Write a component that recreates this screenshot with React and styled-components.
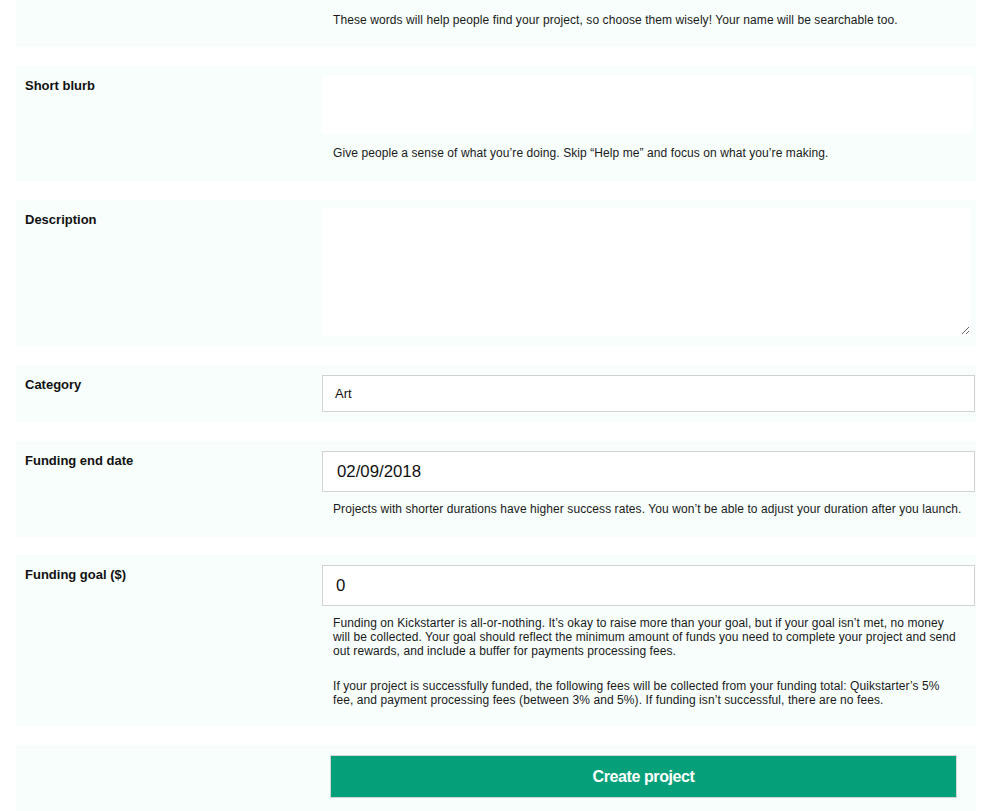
import React from 'react';
import styled, { createGlobalStyle } from 'styled-components';

const GlobalStyle = createGlobalStyle`
  html, body {
    margin: 0;
    padding: 0;
    background: #ffffff;
    overflow: hidden;
  }
  * {
    box-sizing: border-box;
  }
`;

const Page = styled.form`
  margin-top: -46px;
  padding: 0 15px 0 16px;
  font-family: 'Liberation Sans', Arial, Helvetica, sans-serif;
  color: #1a1a1a;
`;

const Row = styled.div`
  display: grid;
  grid-template-columns: 297px 1fr;
  background-color: #f7fefc;
  padding: 10px 1px 10px 9px;
  margin-bottom: ${props => props.$after || 19}px;
`;

const Label = styled.label`
  padding-top: 2px;
  font-size: 13px;
  font-weight: bold;
  line-height: 16px;
  color: #111;
`;

const Field = styled.div`
  display: block;
`;

const TextInput = styled.input`
  display: block;
  width: 100%;
  height: ${props => props.$height || 37}px;
  border: 1px solid #d2d2d2;
  background: #ffffff;
  padding: 0 ${props => props.$pad || 12}px;
  font-family: 'Liberation Sans', Arial, sans-serif;
  font-size: ${props => props.$size || 13}px;
  color: #111;
  outline: none;
`;

const PlainInput = styled.input`
  display: block;
  width: 650px;
  height: 58px;
  border: none;
  background: #ffffff;
  padding: 0 10px;
  font-family: 'Liberation Sans', Arial, sans-serif;
  font-size: 13px;
  outline: none;
`;

const TextArea = styled.textarea`
  display: block;
  width: 649px;
  height: 128px;
  border: 1px solid #ffffff;
  background: #ffffff;
  padding: 8px 10px;
  font-family: 'Liberation Sans', Arial, sans-serif;
  font-size: 13px;
  outline: none;
  margin-top: -2px;
`;

const Help = styled.p`
  margin: ${props => props.$gap || 10}px 0 ${props => props.$after || 11}px;
  padding: 0 13px 0 11px;
  font-size: 12px;
  line-height: 14px;
  letter-spacing: 0.08px;
  color: #1a1a1a;

  & + & {
    margin-top: 21px;
  }
`;

const SubmitButton = styled.button`
  display: block;
  width: 627px;
  height: 43px;
  margin-left: 8px;
  background-color: #05a07a;
  border: 1px solid #d4d4d4;
  color: #ffffff;
  font-family: 'Liberation Sans', Arial, sans-serif;
  font-size: 16px;
  font-weight: bold;
  letter-spacing: -0.4px;
  cursor: pointer;
`;

const Spacer = styled.div`
  height: 60px;
`;

export default function App() {
  return (
    <>
      <GlobalStyle />
      <Page onSubmit={e => e.preventDefault()}>
        {/* row scrolled mostly out of view: only its hint shows */}
        <Row>
          <Label />
          <Field>
            <TextInput $height={36} defaultValue="" />
            <Help $gap={13} $after={10}>These words will help people find your project, so choose them wisely! Your name will be searchable too.</Help>
          </Field>
        </Row>

        <Row>
          <Label>Short blurb</Label>
          <Field>
            <PlainInput />
            <Help $gap={12}>Give people a sense of what you’re doing. Skip “Help me” and focus on what you’re making.</Help>
          </Field>
        </Row>

        <Row>
          <Label>Description</Label>
          <Field>
            <TextArea />
          </Field>
        </Row>

        <Row>
          <Label>Category</Label>
          <Field>
            <TextInput defaultValue="Art" readOnly />
          </Field>
        </Row>

        <Row $after={18}>
          <Label>Funding end date</Label>
          <Field>
            <TextInput $height={41} $pad={14} $size={16.8} defaultValue="02/09/2018" />
            <Help>Projects with shorter durations have higher success rates. You won’t be able to adjust your duration after you launch.</Help>
          </Field>
        </Row>

        <Row>
          <Label>Funding goal ($)</Label>
          <Field>
            <TextInput $height={41} $pad={13} $size={16.8} defaultValue="0" />
            <Help>Funding on Kickstarter is all-or-nothing. It’s okay to raise more than your goal, but if your goal isn’t met, no money will be collected. Your goal should reflect the minimum amount of funds you need to complete your project and send out rewards, and include a buffer for payments processing fees.</Help>
            <Help $after={9}>If your project is successfully funded, the following fees will be collected from your funding total: Quikstarter’s 5% fee, and payment processing fees (between 3% and 5%). If funding isn’t successful, there are no fees.</Help>
          </Field>
        </Row>

        <Row>
          <div />
          <Field>
            <SubmitButton type="submit">Create project</SubmitButton>
            <Spacer />
          </Field>
        </Row>
      </Page>
    </>
  );
}
